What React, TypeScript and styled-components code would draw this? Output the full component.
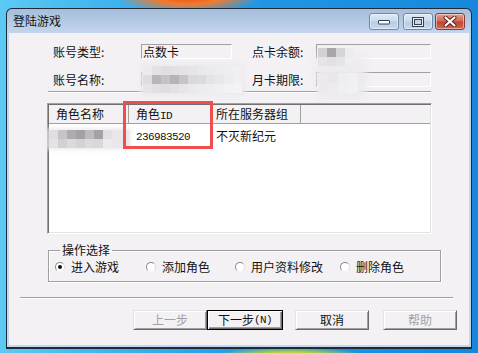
import styled, { createGlobalStyle } from 'styled-components';

const GlobalStyle = createGlobalStyle`
  html, body { margin: 0; padding: 0; }
  body {
    width: 478px;
    height: 353px;
    overflow: hidden;
    font-family: "Noto Sans CJK SC", "Noto Sans", sans-serif;
    font-size: 12px;
    color: #111;
    background:
      radial-gradient(ellipse 72px 16px at 188px -3px, #e4501e 0%, #f47a2a 45%, rgba(250, 150, 60, 0) 100%),
      radial-gradient(ellipse 78px 10px at 290px 357px, #e6e048 0%, #b4d044 50%, rgba(150, 200, 80, 0) 100%),
      linear-gradient(90deg, #5ccaf4 0%, #40b4ee 22%, #1f96e4 55%, #1688dc 100%);
  }
`;

const Desktop = styled.div`
  width: 478px;
  height: 353px;
  box-sizing: border-box;
  padding: 8px 0 0 6px;
`;

const Window = styled.div`
  width: 466px;
  height: 341px;
  box-sizing: border-box;
  border: 1px solid #1c2a3a;
  border-bottom-width: 2px;
  border-radius: 6px 6px 0 0;
  padding: 0 2px 2px 2px;
  background: linear-gradient(#a6bedb, #c2d5ec 24px, #c3d7ee);
  display: flex;
  flex-direction: column;
`;

const TitleBar = styled.div`
  height: 24px;
  display: flex;
  align-items: flex-start;
`;

const Title = styled.span`
  padding: 5px 0 0 4px;
  flex: 1;
  line-height: 14px;
  color: #151515;
`;

const CaptionButtons = styled.div`
  display: flex;
  margin: 4px 4px 0 0;
`;

const CaptionButton = styled.div<{ $close?: boolean; $gap?: number }>`
  width: 30px;
  height: 17px;
  box-sizing: border-box;
  margin-left: ${({ $gap }) => $gap ?? 0}px;
  border: 1px solid ${({ $close }) => ($close ? '#8c3b32' : '#7387a3')};
  border-radius: 3px;
  display: flex;
  align-items: center;
  justify-content: center;
  background: ${({ $close }) =>
    $close
      ? 'linear-gradient(#e3a193, #d06a57 45%, #c04532 55%, #d46a52)'
      : 'linear-gradient(#e0e9f5, #cbdbee 45%, #b9cce6 55%, #c9daef)'};
  box-shadow: inset 0 0 0 1px rgba(255, 255, 255, 0.45);
`;

const Client = styled.div`
  flex: 1;
  background: #f4f1f4;
  display: flex;
  flex-direction: column;
  align-items: flex-start;
`;

const InfoGrid = styled.div`
  margin: 11px 0 0 44px;
  display: grid;
  grid-template-columns: 88px 91px 84px 115px;
  grid-template-rows: 15px 15px;
  row-gap: 13px;
  align-items: center;
`;

const Label = styled.span<{ $indent?: number }>`
  padding-left: ${({ $indent }) => $indent ?? 0}px;
  line-height: 14px;
`;

const Field = styled.div`
  height: 15px;
  box-sizing: border-box;
  border: 1px solid;
  border-color: #a0a0a0 #ffffff #ffffff #a0a0a0;
  display: flex;
  align-items: center;
  line-height: 13px;
  padding-left: 1px;
  overflow: visible;
`;

const Separator = styled.div<{ $left: number; $width: number; $top: number }>`
  margin: ${({ $top }) => $top}px 0 0 ${({ $left }) => $left}px;
  width: ${({ $width }) => $width}px;
  height: 1px;
  background: #a0a0a0;
  border-bottom: 1px solid #ffffff;
`;

const MosaicGrid = styled.div<{ $size: number; $halo: string; $shift?: number }>`
  display: grid;
  grid-auto-rows: ${({ $size }) => $size}px;
  grid-auto-columns: ${({ $size }) => $size}px;
  margin-top: ${({ $shift }) => $shift ?? 0}px;
  filter: blur(0.6px);
  box-shadow: ${({ $halo }) => $halo};
  background: #e9e7ea;
`;

const MosaicCell = styled.span<{ $row: number; $col: number; $color: string }>`
  grid-row: ${({ $row }) => $row};
  grid-column: ${({ $col }) => $col};
  background: ${({ $color }) => $color};
`;

const Mosaic = ({
  cells,
  size,
  halo,
  shift,
}: {
  cells: string[][];
  size: number;
  halo: string;
  shift?: number;
}) => (
  <MosaicGrid $size={size} $halo={halo} $shift={shift}>
    {cells.map((row, r) =>
      row.map((c, i) => <MosaicCell key={`${r}-${i}`} $row={r + 1} $col={i + 1} $color={c} />)
    )}
  </MosaicGrid>
);

const List = styled.div`
  position: relative;
  margin: 10px 0 0 38px;
  width: 385px;
  height: 131px;
  box-sizing: border-box;
  border: 1px solid;
  border-color: #a0a0a0 #ffffff #ffffff #a0a0a0;
  box-shadow: inset 1px 1px 0 #707070, inset -1px -1px 0 #e3e3e3;
  background: #ffffff;
  padding: 1px;
`;

const Header = styled.div`
  display: grid;
  grid-template-columns: 80px 82px 90px 1fr;
  height: 18px;
  background: #f4f1f4;
  border-bottom: 1px solid #a0a0a0;
`;

const HeadCell = styled.div<{ $pad: number; $last?: boolean }>`
  padding-left: ${({ $pad }) => $pad}px;
  line-height: 17px;
  border-right: ${({ $last }) => ($last ? 'none' : '1px solid #a0a0a0')};
  white-space: nowrap;
  overflow: hidden;
`;

const Row = styled.div`
  display: grid;
  grid-template-columns: 80px 82px 90px 1fr;
  height: 18px;
  align-items: center;
`;

const Cell = styled.div<{ $pad: number }>`
  padding-left: ${({ $pad }) => $pad}px;
  line-height: 14px;
  white-space: nowrap;
`;

const Ascii = styled.span`
  font-family: "Liberation Mono", "DejaVu Sans Mono", monospace;
  font-size: 11px;
  letter-spacing: -0.6px;
`;

const Highlight = styled.div`
  position: absolute;
  left: 75px;
  top: -3px;
  width: 90px;
  height: 48px;
  box-sizing: border-box;
  border: 3px solid #ee4e50;
  pointer-events: none;
`;

const Group = styled.fieldset`
  margin: 9px 0 0 39px;
  width: 393px;
  box-sizing: border-box;
  padding: 3px 0 7px 6px;
  border: 1px solid #a0a0a0;
  box-shadow: 1px 1px 0 #ffffff, inset 1px 1px 0 #ffffff;
  display: grid;
  grid-template-columns: 91px 89px 105px auto;
`;

const Legend = styled.legend`
  padding: 0 2px;
  margin-left: 5px;
  line-height: 14px;
`;

const RadioItem = styled.label`
  display: flex;
  align-items: center;
  gap: 6px;
  line-height: 14px;
  white-space: nowrap;
`;

const RadioMark = styled.span<{ $checked?: boolean }>`
  width: 10px;
  height: 10px;
  box-sizing: border-box;
  border-radius: 50%;
  border: 1px solid;
  border-color: #8a8a8a #dcdcdc #f4f4f4 #8a8a8a;
  background: #ffffff;
  display: flex;
  align-items: center;
  justify-content: center;
  &::after {
    content: '';
    width: 4px;
    height: 4px;
    border-radius: 50%;
    background: ${({ $checked }) => ($checked ? '#111' : 'transparent')};
  }
`;

const ButtonRow = styled.div`
  display: flex;
  margin: 11px 0 0 124px;
`;

const Button = styled.div<{ $width: number; $gap?: number; $disabled?: boolean; $default?: boolean }>`
  width: ${({ $width }) => $width}px;
  height: 20px;
  margin-left: ${({ $gap }) => $gap ?? 0}px;
  box-sizing: border-box;
  display: flex;
  align-items: center;
  justify-content: center;
  background: #f4f1f4;
  color: ${({ $disabled }) => ($disabled ? '#a3a0a3' : '#111')};
  border: 1px solid;
  border-color: ${({ $default }) =>
    $default ? '#000 #000 #000 #000' : '#e3e3e3 #696969 #696969 #e3e3e3'};
  box-shadow: ${({ $default }) =>
    $default
      ? 'inset 1px 1px 0 #ffffff, inset -1px -1px 0 #696969, inset -2px -2px 0 #a0a0a0'
      : 'inset 1px 1px 0 #ffffff, inset -1px -1px 0 #a0a0a0'};
  line-height: 14px;
`;

const nameCells = [
  ['#eceaed', '#e4e2e6', '#e0dee2', '#e2e0e4', '#e4e2e6', '#e6e4e8', '#e9e8eb', '#eceaed', '#ecebee', '#eeedf0', '#f0eff1'],
  ['#dedcdf', '#b8b6ba', '#c5c3c7', '#b6b4b8', '#c6c4c8', '#dad8dc', '#dcdadd', '#e4e3e6', '#e8e7ea', '#ecebee', '#f0eff1'],
  ['#e6e4e7', '#e2e0e3', '#dfdde0', '#e3e1e4', '#e7e5e8', '#ebe9ec', '#ecebee', '#eeedf0', '#f0eff1', '#f2f1f3', '#f3f2f4'],
];

const balanceCells = [
  ['#d2d0d4', '#a8a6aa', '#d6d4d8', '#ecebee'],
  ['#e6e4e8', '#e2e0e4', '#e6e4e8', '#eeedf0'],
];

const expiryCells = [
  ['#ebe9ec', '#e9e7ea', '#eeedf0', '#f0eff1'],
  ['#eceaed', '#edebee', '#efeef0', '#f1f0f2'],
];

const roleCells = [
  ['#e0dee1', '#c6c4c7', '#aeacaf', '#a3a1a4', '#bdbbbe', '#a4a2a5', '#e2e0e3'],
  ['#e4e2e5', '#d2d0d3', '#dbd9dc', '#d4d2d5', '#dcdadd', '#d9d7da', '#eceaed'],
];

const MinIcon = () => (
  <svg width="12" height="6" viewBox="0 0 12 6">
    <rect x="0.5" y="1.5" width="11" height="3.5" rx="0.5" fill="#ffffff" stroke="#33445a" />
  </svg>
);

const MaxIcon = () => (
  <svg width="12" height="10" viewBox="0 0 12 10">
    <rect x="0.5" y="0.5" width="11" height="9" fill="#e9eef6" stroke="#33445a" />
    <rect x="2.5" y="2.5" width="7" height="5" fill="#c9d4e2" stroke="#33445a" />
  </svg>
);

const CloseIcon = () => (
  <svg width="14" height="11" viewBox="0 0 14 11">
    <path d="M2.5 1.5 L11.5 9.5 M11.5 1.5 L2.5 9.5" stroke="#5a1e16" strokeWidth="4" strokeLinecap="round" />
    <path d="M2.5 1.5 L11.5 9.5 M11.5 1.5 L2.5 9.5" stroke="#ffffff" strokeWidth="2.2" strokeLinecap="round" />
  </svg>
);

const options = ['进入游戏', '添加角色', '用户资料修改', '删除角色'];

const App = () => (
  <>
    <GlobalStyle />
    <Desktop>
      <Window>
        <TitleBar>
          <Title>登陆游戏</Title>
          <CaptionButtons>
            <CaptionButton>
              <MinIcon />
            </CaptionButton>
            <CaptionButton $gap={4}>
              <MaxIcon />
            </CaptionButton>
            <CaptionButton $gap={2} $close>
              <CloseIcon />
            </CaptionButton>
          </CaptionButtons>
        </TitleBar>
        <Client>
          <InfoGrid>
            <Label>账号类型:</Label>
            <Field>点数卡</Field>
            <Label $indent={20}>点卡余额:</Label>
            <Field>
              <Mosaic cells={balanceCells} size={9} shift={10} halo="4px 12px 10px 6px rgba(236,234,238,0.9)" />
            </Field>
            <Label>账号名称:</Label>
            <Field>
              <Mosaic cells={nameCells} size={9} shift={0} halo="0 0 5px 3px rgba(236,234,238,0.9)" />
            </Field>
            <Label $indent={20}>月卡期限:</Label>
            <Field>
              <Mosaic cells={expiryCells} size={10} shift={6} halo="4px 2px 6px 4px rgba(236,234,238,0.9)" />
            </Field>
          </InfoGrid>
          <Separator $left={39} $width={383} $top={4} />
          <List>
            <Header>
              <HeadCell $pad={7}>角色名称</HeadCell>
              <HeadCell $pad={7}>
                角色<Ascii>ID</Ascii>
              </HeadCell>
              <HeadCell $pad={5}>所在服务器组</HeadCell>
              <HeadCell $pad={5} $last />
            </Header>
            <Row>
              <Cell $pad={0}>
                <Mosaic cells={roleCells} size={9} shift={6} halo="0 0 4px 2px rgba(236,234,238,0.9)" />
              </Cell>
              <Cell $pad={7}>
                <Ascii>236983520</Ascii>
              </Cell>
              <Cell $pad={5}>不灭新纪元</Cell>
              <Cell $pad={0} />
            </Row>
            <Highlight />
          </List>
          <Group>
            <Legend>操作选择</Legend>
            {options.map((o, i) => (
              <RadioItem key={o}>
                <RadioMark $checked={i === 0} />
                {o}
              </RadioItem>
            ))}
          </Group>
          <Separator $left={11} $width={433} $top={15} />
          <ButtonRow>
            <Button $width={74} $disabled>上一步</Button>
            <Button $width={76} $default>
              下一步<Ascii>(N)</Ascii>
            </Button>
            <Button $width={74} $gap={12}>取消</Button>
            <Button $width={74} $gap={14} $disabled>帮助</Button>
          </ButtonRow>
        </Client>
      </Window>
    </Desktop>
  </>
);

export default App;
